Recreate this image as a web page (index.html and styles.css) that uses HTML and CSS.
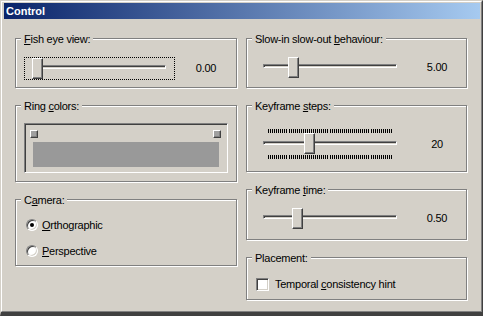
FILE: index.html
```html
<!DOCTYPE html>
<html lang="en">
<head>
    <meta charset="UTF-8">
    <title>Control</title>
    <link rel="stylesheet" href="styles.css">
</head>
<body>
    <div class="window">
        <div class="frame">
            <div class="titlebar">Control</div>
            <div class="client">
                <div class="column">
                    <div class="group group-fish">
                        <span class="legend"><u>F</u>ish eye view:</span>
                        <div class="slider-row">
                            <div class="slider focused">
                                <div class="track"></div>
                                <div class="thumb" style="left: 8px"></div>
                            </div>
                            <div class="value">0.00</div>
                        </div>
                    </div>

                    <div class="group group-ring">
                        <span class="legend">Ring <u>c</u>olors:</span>
                        <div class="ring-panel">
                            <div class="handles">
                                <div class="handle"></div>
                                <div class="handle"></div>
                            </div>
                            <div class="ring-bar"></div>
                        </div>
                    </div>

                    <div class="group group-camera">
                        <span class="legend">C<u>a</u>mera:</span>
                        <div class="options">
                            <div class="option">
                                <div class="radio checked"></div>
                                <span><u>O</u>rthographic</span>
                            </div>
                            <div class="option">
                                <div class="radio"></div>
                                <span><u>P</u>erspective</span>
                            </div>
                        </div>
                    </div>
                </div>

                <div class="column">
                    <div class="group group-slow">
                        <span class="legend">Slow-in slow-out <u>b</u>ehaviour:</span>
                        <div class="slider-row">
                            <div class="slider">
                                <div class="track"></div>
                                <div class="thumb" style="left: 33px"></div>
                            </div>
                            <div class="value">5.00</div>
                        </div>
                    </div>

                    <div class="group group-steps">
                        <span class="legend">Keyframe <u>s</u>teps:</span>
                        <div class="slider-row">
                            <div class="ticked">
                                <svg class="ticks" width="151" height="4"></svg>
                                <div class="slider">
                                    <div class="track"></div>
                                    <div class="thumb" style="left: 49px"></div>
                                </div>
                                <svg class="ticks" width="151" height="4"></svg>
                            </div>
                            <div class="value">20</div>
                        </div>
                    </div>

                    <div class="group group-time">
                        <span class="legend">Keyframe <u>t</u>ime:</span>
                        <div class="slider-row">
                            <div class="slider">
                                <div class="track"></div>
                                <div class="thumb" style="left: 37px"></div>
                            </div>
                            <div class="value">0.50</div>
                        </div>
                    </div>

                    <div class="group group-placement">
                        <span class="legend">Placement:</span>
                        <div class="option">
                            <div class="checkbox"></div>
                            <span>Temporal <u>c</u>onsistency hint</span>
                        </div>
                    </div>
                </div>
            </div>
        </div>
    </div>

    <script>
        // Tick marks for the keyframe steps slider (0..60)
        document.querySelectorAll('.ticks').forEach(function(svg) {
            let d = '';
            for (let i = 0; i <= 60; i++) {
                const x = 13 + Math.round(i * 123 / 60) + 0.5;
                d += 'M' + x + ' 0v4';
            }
            svg.innerHTML = '<path d="' + d + '" stroke="#000" stroke-width="1"/>';
        });
    </script>
</body>
</html>
```

FILE: styles.css
```css
body {
    margin: 0;
    font-family: "Liberation Sans", Arial, sans-serif;
    font-size: 11px;
    line-height: 13px;
    letter-spacing: -0.25px;
    color: #000;
    background-color: #d4d0c8;
}

.window {
    width: 483px;
    height: 316px;
    box-sizing: border-box;
    border-style: solid;
    border-width: 1px 1px 4px 1px;
    border-color: #d4d0c8 #404040 #404040 #d4d0c8;
    background-color: #d4d0c8;
}

.frame {
    height: 100%;
    box-sizing: border-box;
    border: 1px solid;
    border-color: #fff #808080 #808080 #fff;
    padding: 1px 1px 0 2px;
}

.titlebar {
    height: 16px;
    line-height: 16px;
    padding-left: 2px;
    background: linear-gradient(to right, #0a246a, #a6caf0);
    color: #fff;
    font-weight: bold;
    letter-spacing: 0;
}

.client {
    display: grid;
    grid-template-columns: 222px 221px;
    column-gap: 9px;
    align-items: start;
    padding: 19px 0 0 11px;
}

.column {
    display: flex;
    flex-direction: column;
    gap: 17px;
}

/* etched group box */
.group {
    position: relative;
    box-sizing: border-box;
    border: 1px solid #808080;
    box-shadow: 1px 1px 0 #fff, inset 1px 1px 0 #fff;
    padding-left: 8px;
}

.legend {
    position: absolute;
    top: -6px;
    left: 5px;
    padding: 0 3px;
    background-color: #d4d0c8;
    white-space: nowrap;
}

.group-fish { height: 50px; padding-top: 18px; }
.group-ring { height: 77px; padding-top: 17px; }
.group-camera { height: 67px; padding-top: 18px; padding-left: 10px; }
.group-slow { height: 50px; padding-top: 17px; }
.group-steps { height: 67px; padding-top: 23px; }
.group-time { height: 51px; padding-top: 17px; }
.group-placement { height: 43px; padding-top: 19px; padding-left: 9px; }

/* trackbar */
.slider-row {
    display: flex;
    align-items: center;
}

.slider {
    position: relative;
    width: 151px;
    height: 23px;
    box-sizing: border-box;
    padding: 8px 0 0 8px;
}

.focused {
    outline: 1px dotted #000;
    outline-offset: -1px;
}

.track {
    width: 134px;
    height: 4px;
    box-sizing: border-box;
    border: 1px solid;
    border-color: #808080 #fff #fff #808080;
    box-shadow: inset 1px 1px 0 #404040;
    background-color: #d4d0c8;
}

.thumb {
    position: absolute;
    top: 1px;
    width: 11px;
    height: 21px;
    box-sizing: border-box;
    border: 1px solid;
    border-color: #fff #404040 #404040 #fff;
    box-shadow: inset -1px -1px 0 #808080;
    background-color: #d4d0c8;
}

.ticked .slider {
    height: 22px;
}

.ticked .thumb {
    top: 0;
}

.ticks {
    display: block;
}

.value {
    width: 42px;
    margin-left: 10px;
    text-align: center;
}

/* ring colors */
.ring-panel {
    width: 204px;
    height: 50px;
    box-sizing: border-box;
    border: 1px solid;
    border-color: #808080 #fff #fff #808080;
    box-shadow: inset 1px 1px 0 #404040, inset -1px -1px 0 #d4d0c8;
    padding: 6px 6px 0 5px;
}

.handles {
    display: flex;
    justify-content: space-between;
}

.handle {
    width: 8px;
    height: 8px;
    box-sizing: border-box;
    border: 1px solid;
    border-color: #fff #404040 #404040 #fff;
    box-shadow: inset -1px -1px 0 #808080;
    background-color: #a0a0a0;
}

.ring-bar {
    width: 186px;
    height: 25px;
    margin: 4px 0 0 3px;
    background-color: #999;
}

/* radio buttons and check box */
.options {
    display: flex;
    flex-direction: column;
    gap: 12px;
}

.option {
    display: flex;
    align-items: center;
    height: 14px;
    gap: 4px;
}

.group-placement .option {
    gap: 6px;
}

.radio {
    position: relative;
    width: 12px;
    height: 12px;
    box-sizing: border-box;
    border-radius: 50%;
    border: 1px solid;
    border-color: #808080 #fff #fff #808080;
    box-shadow: inset 1px 1px 0 #404040, inset -1px -1px 0 #d4d0c8;
    background-color: #fff;
}

.radio.checked::after {
    content: "";
    position: absolute;
    left: 3px;
    top: 3px;
    width: 4px;
    height: 4px;
    border-radius: 50%;
    background-color: #000;
}

.checkbox {
    width: 13px;
    height: 13px;
    box-sizing: border-box;
    border: 1px solid;
    border-color: #808080 #fff #fff #808080;
    box-shadow: inset 1px 1px 0 #404040, inset -1px -1px 0 #d4d0c8;
    background-color: #fff;
}
```
